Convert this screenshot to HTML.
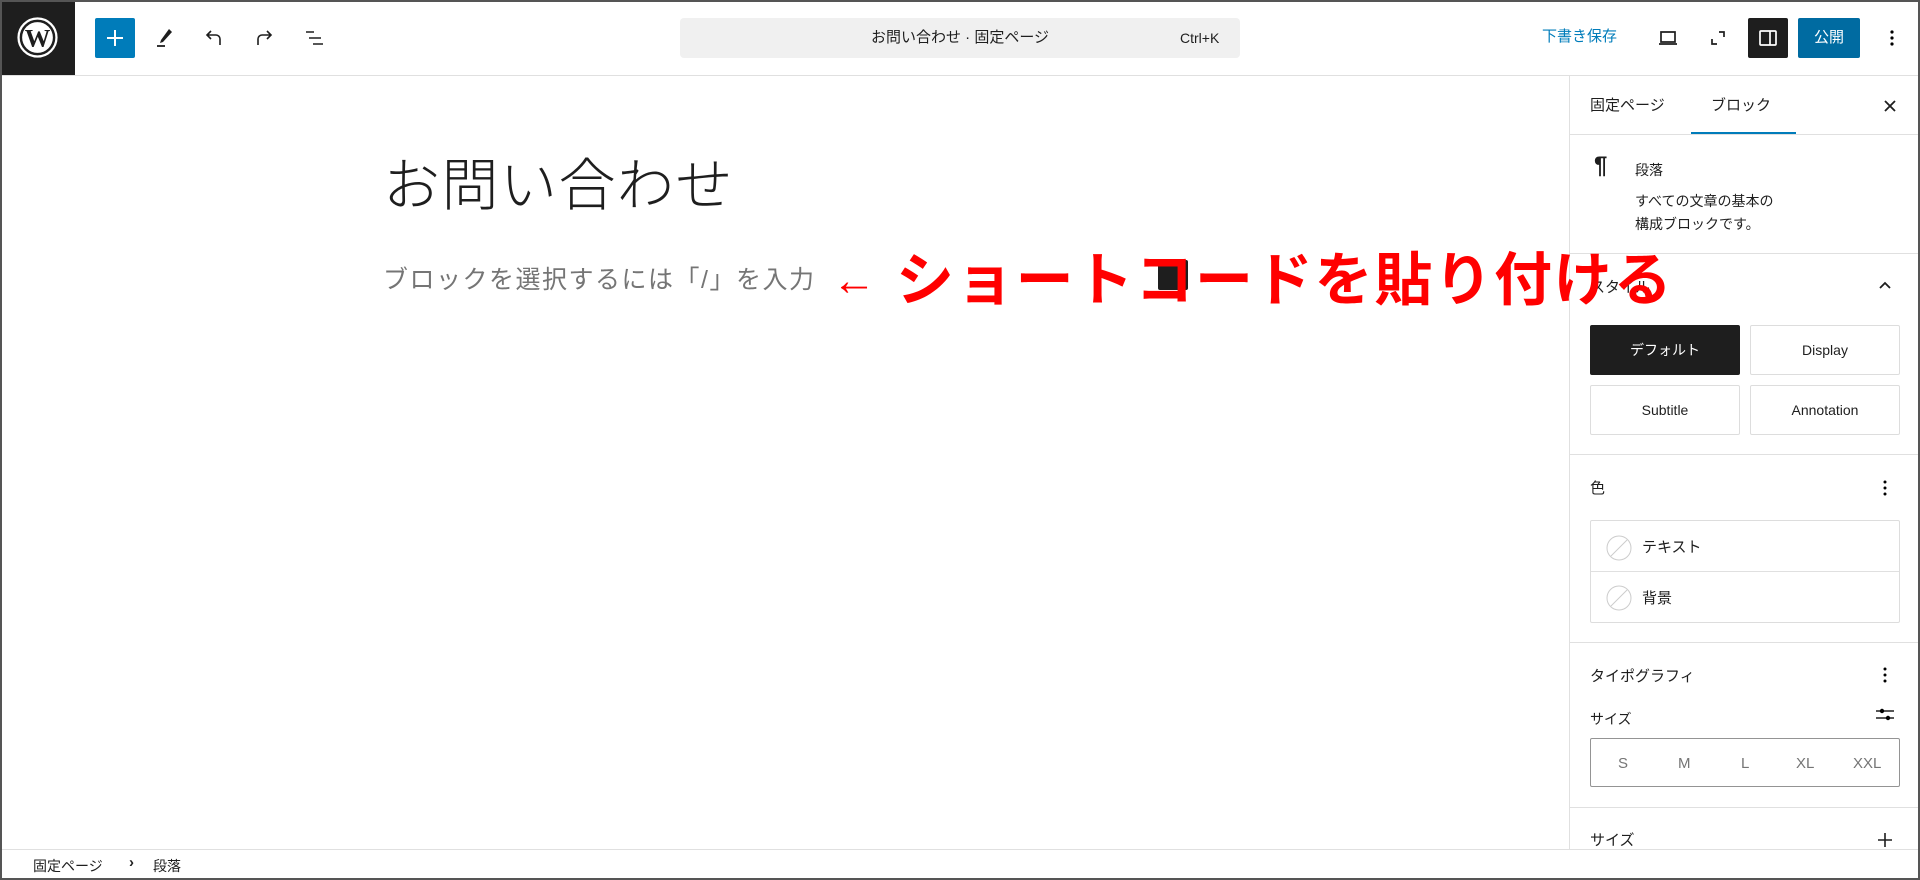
<!DOCTYPE html>
<html><head><meta charset="utf-8"><style>
*{box-sizing:border-box;margin:0;padding:0}
body{width:1920px;height:880px;overflow:hidden;background:#fff;font-family:"Liberation Sans","Noto Sans CJK JP",sans-serif;color:#1e1e1e;position:relative}
.a{position:absolute}
.frame{position:absolute;left:0;top:0;width:1920px;height:880px;border:2px solid #555;pointer-events:none;z-index:10}
.t{font-size:15px;white-space:nowrap}
.hl{position:absolute;height:1px;background:#e0e0e0}
.btn{position:absolute;border:1px solid #ddd;border-radius:2px;display:flex;align-items:center;justify-content:center;font-size:14px}
</style></head><body>
<div class="frame"></div>
<div class="a" style="left:0;top:0;width:75px;height:75px;background:#1e1e1e"></div>
<svg class="a" style="left:17px;top:17px" width="41" height="41" viewBox="0 0 40 40"><circle cx="20" cy="20" r="18.5" fill="none" stroke="#fff" stroke-width="2.2"/><circle cx="20" cy="20" r="15" fill="#fff"/><text x="20" y="29" text-anchor="middle" font-family="Liberation Serif" font-weight="bold" font-size="25" fill="#1e1e1e">W</text></svg>
<div class="hl" style="left:0;top:75px;width:1920px"></div>
<div class="a" style="left:95px;top:18px;width:40px;height:40px;background:#007cba;border-radius:2px"></div>
<svg class="a" style="left:95px;top:18px" width="40" height="40"><path d="M20 12v16M12 20h16" stroke="#fff" stroke-width="2"/></svg>
<svg class="a" style="left:152px;top:26px" width="24" height="24" viewBox="0 0 24 24"><path d="M17 3l3 3-9 10-3 1 1-3z" fill="#1e1e1e"/><path d="M5 20h8" stroke="#1e1e1e" stroke-width="1.8"/></svg>
<svg class="a" style="left:202px;top:26px" width="24" height="24" viewBox="0 0 24 24"><path d="M18 19v-6a4 4 0 0 0-4-4H6M9 5L5 9l4 4" fill="none" stroke="#1e1e1e" stroke-width="1.6"/></svg>
<svg class="a" style="left:252px;top:26px" width="24" height="24" viewBox="0 0 24 24"><path d="M6 19v-6a4 4 0 0 1 4-4h8M15 5l4 4-4 4" fill="none" stroke="#1e1e1e" stroke-width="1.6"/></svg>
<svg class="a" style="left:303px;top:26px" width="24" height="24" viewBox="0 0 24 24"><path d="M3 6h8M6 12h12M10 18h10" stroke="#1e1e1e" stroke-width="1.6"/></svg>
<div class="a" style="left:680px;top:18px;width:560px;height:40px;background:#f0f0f0;border-radius:4px"></div>
<div class="a t" style="left:680px;top:18px;width:560px;line-height:40px;text-align:center;font-size:15px">お問い合わせ · 固定ページ</div>
<div class="a t" style="left:1180px;top:18px;line-height:40px;font-size:14px">Ctrl+K</div>
<div class="a t" style="left:1542px;top:25px;color:#007cba;font-size:15px">下書き保存</div>
<svg class="a" style="left:1656px;top:26px" width="24" height="24" viewBox="0 0 24 24"><path d="M5 6h14v10H5zM3 18h18" fill="none" stroke="#1e1e1e" stroke-width="1.7"/></svg>
<svg class="a" style="left:1706px;top:26px" width="24" height="24" viewBox="0 0 24 24"><path d="M6 13v5h5M13 6h5v5" fill="none" stroke="#1e1e1e" stroke-width="1.7"/></svg>
<div class="a" style="left:1748px;top:18px;width:40px;height:40px;background:#1e1e1e;border-radius:2px"></div>
<svg class="a" style="left:1756px;top:26px" width="24" height="24" viewBox="0 0 24 24"><rect x="4" y="5" width="16" height="14" rx="1" fill="none" stroke="#fff" stroke-width="1.7"/><path d="M14 5v14" stroke="#fff" stroke-width="1.7"/></svg>
<div class="a t" style="left:1798px;top:18px;width:62px;height:40px;background:#006ba1;border-radius:2px;color:#fff;line-height:40px;text-align:center;font-size:15px">公開</div>
<svg class="a" style="left:1880px;top:26px" width="24" height="24"><circle cx="12" cy="6" r="1.6"/><circle cx="12" cy="12" r="1.6"/><circle cx="12" cy="18" r="1.6"/></svg>
<div class="a" style="left:383px;top:150px;font-size:57px;line-height:72px;white-space:nowrap;font-weight:300;letter-spacing:1.5px">お問い合わせ</div>
<div class="a" style="left:383px;top:263px;font-size:25px;line-height:34px;color:#757575;white-space:nowrap;letter-spacing:1.5px">ブロックを選択するには「/」を入力</div>
<div class="a" style="left:1158px;top:260px;width:30px;height:30px;background:#1e1e1e;border-radius:2px"></div>
<div class="a" style="left:832px;top:256px;font-size:44px;line-height:50px;color:#f00;white-space:nowrap">←</div>
<div class="a" style="left:896px;top:246px;font-size:58px;line-height:70px;color:#f00;font-weight:bold;white-space:nowrap;letter-spacing:1.8px;z-index:5">ショートコードを貼り付ける</div>
<div class="a" style="left:1569px;top:75px;width:1px;height:774px;background:#e0e0e0"></div>
<div class="a t" style="left:1590px;top:94px">固定ページ</div>
<div class="a t" style="left:1711px;top:94px">ブロック</div>
<div class="a" style="left:1691px;top:132px;width:105px;height:2px;background:#007cba"></div>
<svg class="a" style="left:1878px;top:94px" width="24" height="24"><path d="M7 7l10 10M17 7L7 17" stroke="#1e1e1e" stroke-width="1.8"/></svg>
<div class="hl" style="left:1570px;top:134px;width:350px"></div>
<div class="a" style="left:1594px;top:152px;font-size:24px;font-weight:bold">¶</div>
<div class="a t" style="left:1635px;top:160px;font-size:14px">段落</div>
<div class="a t" style="left:1635px;top:190px;font-size:14px;line-height:23px">すべての文章の基本の<br>構成ブロックです。</div>
<div class="hl" style="left:1570px;top:253px;width:350px"></div>
<div class="a t" style="left:1590px;top:276px">スタイル</div>
<svg class="a" style="left:1873px;top:274px" width="24" height="24"><path d="M7 14l5-5 5 5" fill="none" stroke="#1e1e1e" stroke-width="1.8"/></svg>
<div class="btn" style="left:1590px;top:325px;width:150px;height:50px;background:#1e1e1e;color:#fff;border-color:#1e1e1e">デフォルト</div>
<div class="btn" style="left:1750px;top:325px;width:150px;height:50px">Display</div>
<div class="btn" style="left:1590px;top:385px;width:150px;height:50px">Subtitle</div>
<div class="btn" style="left:1750px;top:385px;width:150px;height:50px">Annotation</div>
<div class="hl" style="left:1570px;top:454px;width:350px"></div>
<div class="a t" style="left:1590px;top:477px">色</div>
<svg class="a" style="left:1873px;top:476px" width="24" height="24"><circle cx="12" cy="6" r="1.5"/><circle cx="12" cy="12" r="1.5"/><circle cx="12" cy="18" r="1.5"/></svg>
<div class="a" style="left:1590px;top:520px;width:310px;height:103px;border:1px solid #ddd;border-radius:2px"></div>
<div class="hl" style="left:1591px;top:571px;width:308px"></div>
<svg class="a" style="left:1606px;top:535px" width="26" height="26"><circle cx="13" cy="13" r="12" fill="none" stroke="#ccc"/><path d="M5 21L21 5" stroke="#ccc"/></svg>
<svg class="a" style="left:1606px;top:585px" width="26" height="26"><circle cx="13" cy="13" r="12" fill="none" stroke="#ccc"/><path d="M5 21L21 5" stroke="#ccc"/></svg>
<div class="a t" style="left:1642px;top:536px">テキスト</div>
<div class="a t" style="left:1642px;top:587px">背景</div>
<div class="hl" style="left:1570px;top:642px;width:350px"></div>
<div class="a t" style="left:1590px;top:665px">タイポグラフィ</div>
<svg class="a" style="left:1873px;top:663px" width="24" height="24"><circle cx="12" cy="6" r="1.5"/><circle cx="12" cy="12" r="1.5"/><circle cx="12" cy="18" r="1.5"/></svg>
<div class="a t" style="left:1590px;top:709px;font-size:14px">サイズ</div>
<svg class="a" style="left:1873px;top:703px" width="24" height="24"><path d="M3 8h18M3 15h18" stroke="#1e1e1e" stroke-width="1.5"/><circle cx="9" cy="8" r="2.2"/><circle cx="15" cy="15" r="2.2"/></svg>
<div class="a" style="left:1590px;top:738px;width:310px;height:49px;border:1px solid #949494;border-radius:2px"></div>
<div class="a t" style="left:1618px;top:755px;color:#757575;font-size:15px">S</div>
<div class="a t" style="left:1678px;top:755px;color:#757575;font-size:15px">M</div>
<div class="a t" style="left:1741px;top:755px;color:#757575;font-size:15px">L</div>
<div class="a t" style="left:1796px;top:755px;color:#757575;font-size:15px">XL</div>
<div class="a t" style="left:1853px;top:755px;color:#757575;font-size:15px">XXL</div>
<div class="hl" style="left:1570px;top:807px;width:350px"></div>
<div class="a t" style="left:1590px;top:829px">サイズ</div>
<svg class="a" style="left:1873px;top:828px" width="24" height="24"><path d="M12 5v14M5 12h14" stroke="#1e1e1e" stroke-width="1.6"/></svg>
<div class="a" style="left:0;top:849px;width:1920px;height:31px;background:#fff;border-top:1px solid #e0e0e0"></div>
<div class="a t" style="left:33px;top:856px;font-size:14px">固定ページ</div>
<div class="a t" style="left:129px;top:854px;font-size:15px;font-weight:bold">›</div>
<div class="a t" style="left:153px;top:856px;font-size:14px">段落</div>
</body></html>
